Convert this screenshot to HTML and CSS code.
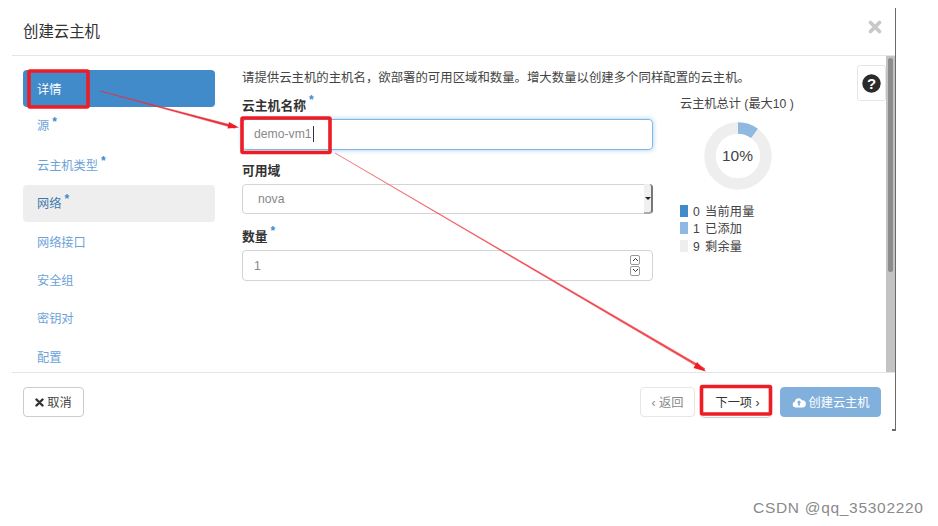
FILE: index.html
```html
<!DOCTYPE html>
<html lang="zh-CN">
<head>
<meta charset="utf-8">
<title>创建云主机</title>
<link rel="stylesheet" href="styles.css">
</head>
<body>
<div class="modal">
  <header class="head">
    <h1 class="title">创建云主机</h1>
    <svg class="close" width="14" height="14" viewBox="0 0 14 14"><path d="M2.500 2.500 11.500 11.500M11.500 2.500 2.500 11.500" stroke="#c8c8c8" stroke-width="3.600" stroke-linecap="round"/></svg>
  </header>
  <div class="main">
    <nav class="nav">
      <a class="item active">详情</a>
      <a class="item raise">源<sup class="req">*</sup></a>
      <a class="item">云主机类型<sup class="req">*</sup></a>
      <a class="item hover">网络<sup class="req">*</sup></a>
      <a class="item">网络接口</a>
      <a class="item">安全组</a>
      <a class="item">密钥对</a>
      <a class="item">配置</a>
    </nav>
    <section class="content">
      <p class="intro">请提供云主机的主机名，欲部署的可用区域和数量。增大数量以创建多个同样配置的云主机。</p>
      <div class="columns">
        <div class="form">
          <label class="label">云主机名称<sup class="req">*</sup></label>
          <div class="field focus"><span>demo-vm1</span><i class="caret"></i></div>
          <label class="label">可用域</label>
          <div class="field select"><span>nova</span><b class="arrow"></b></div>
          <label class="label">数量<sup class="req">*</sup></label>
          <div class="field number"><span>1</span>
            <div class="spin"><i>
              <svg width="7" height="5" viewBox="0 0 7 5"><path d="M1 4 3.500 1.500 6 4" fill="none" stroke="#333" stroke-width="1"/></svg></i><i>
              <svg width="7" height="5" viewBox="0 0 7 5"><path d="M1 1 3.500 3.500 6 1" fill="none" stroke="#333" stroke-width="1"/></svg></i></div>
          </div>
        </div>
        <aside class="quota">
          <div class="quota-title">云主机总计 (最大10 )</div>
          <div class="donut">
            <svg width="68" height="68" viewBox="0 0 68 68">
              <circle cx="34" cy="34" r="28" fill="none" stroke="#eeeeee" stroke-width="11.500"/>
              <circle cx="34" cy="34" r="28" fill="none" stroke="#8fb9e0" stroke-width="11.500" stroke-dasharray="17.600 158.300" transform="rotate(-90 34 34)"/>
            </svg>
            <span class="pct">10%</span>
          </div>
          <ul class="legend">
            <li><i class="sw used"></i>0 当前用量</li>
            <li><i class="sw added"></i>1 已添加</li>
            <li><i class="sw rest"></i>9 剩余量</li>
          </ul>
        </aside>
      </div>
    </section>
    <div class="help">
      <svg width="19" height="19" viewBox="0 0 19 19"><circle cx="9.500" cy="9.500" r="9.200" fill="#2b2b2b"/><text x="9.500" y="14.800" text-anchor="middle" class="help-mark">?</text></svg>
    </div>
    <div class="scrollbar"><div class="thumb"></div></div>
  </div>
  <footer class="foot">
    <button class="btn cancel"><svg width="9" height="9" viewBox="0 0 9 9"><path d="M1.500 1.500 7.500 7.500M7.500 1.500 1.500 7.500" stroke="#333" stroke-width="2.400" stroke-linecap="round"/></svg>取消</button>
    <div class="spacer"></div>
    <button class="btn back">‹ 返回</button>
    <button class="btn next">下一项 ›</button>
    <button class="btn create"><svg width="14" height="11" viewBox="0 0 14 11"><path d="M3.500 10.500a3 3 0 0 1-.6-5.900 3.700 3.700 0 0 1 7-1.300 3.600 3.600 0 0 1 .7 7.200z" fill="#fff"/><path d="M7 3.200 4.600 5.800H6.100V8.500H7.900V5.800H9.400z" fill="#82b0dc"/></svg>创建云主机</button>
  </footer>
</div>
<svg class="marks" width="938" height="526" viewBox="0 0 938 526">
  <rect x="29" y="71" width="59" height="36" rx="1" fill="none" stroke="#ee1c25" stroke-width="3.600"/>
  <rect x="242" y="118" width="88" height="34.500" rx="1" fill="none" stroke="#ee1c25" stroke-width="3.600"/>
  <rect x="701.500" y="386.500" width="69" height="27.500" rx="1" fill="none" stroke="#ee1c25" stroke-width="3.600"/>
  <path d="M100 91 236 126.200 235 128.300z" fill="#e8303a" stroke="#e8303a" stroke-width=".5"/>
  <path d="M229 122 239 127.500 227.500 128.500z" fill="#ee1c25"/>
  <path d="M335 153 705 368.500 704 370.500z" fill="#ef4a50" stroke="#ef4a50" stroke-width=".4"/>
  <path d="M697 362 706 371.500 693.500 368z" fill="#ee1c25"/>
</svg>
<div class="watermark">CSDN @qq_35302220</div>
</body>
</html>
```
FILE: styles.css
```css
* { box-sizing: border-box; }
html, body { margin: 0; padding: 0; background: #fff; }
body {
  width: 938px;
  height: 526px;
  position: relative;
  overflow: hidden;
  padding: 8px 0 0 12px;
  font-family: "Liberation Sans", "Noto Sans CJK SC", sans-serif;
  font-size: 12.2px;
  color: #444;
}
.modal {
  width: 884px;
  height: 423px;
  border-right: 1px solid #6a6a6a;
  display: flex;
  flex-direction: column;
  position: relative;
}
.modal::after {
  content: "";
  position: absolute;
  right: 0;
  bottom: 0;
  width: 3px;
  height: 2px;
  background: #6a6a6a;
}
.head {
  height: 48px;
  flex: none;
  border-bottom: 1px solid #e5e5e5;
  display: flex;
  align-items: center;
  justify-content: space-between;
  padding: 0 13px 3px 11px;
}
.title { margin: 0; font-size: 15.4px; font-weight: 400; color: #333; }
.close { margin-top: -7px; }
.main { flex: none; height: 317px; display: flex; border-bottom: 1px solid #e5e5e5; }
.nav { width: 230px; flex: none; padding: 14px 0 0 11px; display: flex; flex-direction: column; }
.item {
  width: 192px;
  height: 37px;
  flex: none;
  margin-bottom: 1.330px;
  padding-left: 14px;
  display: flex;
  align-items: center;
  border-radius: 4px;
  color: #6da2d8;
  font-size: 12.200px;
}
.item.raise { padding-bottom: 3px; }
.item.active { background: #428bca; color: #fff; }
.item.hover { background: #eeeeee; color: #3f78ad; }
.req { color: #428bca; font-size: 12px; font-weight: 700; line-height: 1; align-self: flex-start; margin: 8px 0 0 3px; }
.content { width: 615px; flex: none; padding-top: 14px; }
.intro { margin: 0 0 8px; font-size: 12.400px; line-height: 17px; width: 520px; white-space: nowrap; }
.columns { display: flex; }
.form { width: 411px; flex: none; }
.label { display: flex; height: 18px; align-items: center; font-size: 12.800px; font-weight: 700; color: #333; margin-bottom: 6px; }
.label .req { margin: -1px 0 0 3px; font-weight: 700; }
.field {
  height: 30.500px;
  border: 1px solid #d4d4d4;
  border-radius: 4px;
  display: flex;
  align-items: center;
  padding-left: 11px;
  margin-bottom: 11px;
  color: #888;
  position: relative;
}
.field.focus { border-color: #7fb6ea; box-shadow: 0 0 5px rgba(102, 175, 233, .6); }
.caret { width: 1px; height: 16px; background: #333; margin-left: 1px; }
.field.select { padding-left: 15px; margin-top: -1px; margin-bottom: 12px; }
.arrow {
  position: absolute;
  right: -1px;
  top: -1px;
  bottom: -1px;
  width: 9px;
  background: #f0f0f0;
  border-right: 2px solid #777;
  border-bottom: 2px solid #aaa;
  border-radius: 0 4px 4px 0;
}
.arrow::after {
  content: "";
  position: absolute;
  left: 1px;
  top: 13px;
  border: 3px solid transparent;
  border-top: 3.500px solid #222;
  border-bottom: 0;
}
.number { justify-content: space-between; padding-right: 12px; }
.number span { padding-top: 2px; }
.spin { display: flex; flex-direction: column; gap: 1px; }
.spin i {
  width: 10px;
  height: 10px;
  border: 1px solid #999;
  border-radius: 2px;
  display: flex;
  align-items: center;
  justify-content: center;
}
.quota { margin-left: 27px; width: 175px; }
.quota-title { height: 18px; line-height: 18px; white-space: nowrap; }
.donut { position: relative; width: 68px; height: 68px; margin: 9px 0 0 23.500px; }
.donut svg { display: block; }
.pct { position: absolute; inset: 0; display: flex; align-items: center; justify-content: center; font-size: 15.500px; color: #444; }
.legend { list-style: none; margin: 12px 0 0; padding: 0; }
.legend li { height: 17.500px; display: flex; align-items: center; white-space: nowrap; word-spacing: 1.500px; letter-spacing: .2px; }
.sw { width: 7.500px; height: 12px; margin-right: 5.500px; flex: none; }
.used { background: #428bca; }
.added { background: #8fb9e0; }
.rest { background: #eeeeee; }
.help {
  width: 29px;
  height: 36px;
  flex: none;
  margin: 9px 0 0 0;
  border: 1px solid #e5e5e5;
  border-radius: 3px;
  display: flex;
  align-items: center;
  justify-content: center;
}
.help-mark { font: 700 15px "Liberation Sans", sans-serif; fill: #fff; }
.scrollbar { width: 9px; flex: none; background: #c3c3c3; padding: 2px 2px 0; }
.thumb { height: 214px; background: #8c8c8c; border-radius: 3px; }
.foot { flex: 1; display: flex; align-items: flex-start; gap: 6px; padding: 14px 14px 0 11px; }
.spacer { flex: 1; }
.btn {
  height: 30px;
  font: inherit;
  border: 1px solid #dcdcdc;
  border-radius: 4px;
  background: #fff;
  color: #444;
  padding: 0;
  display: flex;
  align-items: center;
  justify-content: center;
  gap: 3px;
}
.cancel { width: 61px; border-color: #ccc; }
.back { width: 55px; color: #888; border-color: #e6e6e6; }
.next { width: 70px; color: #333; border: none; padding-left: 3px; box-shadow: 0 1px 1px #ccc; }
.create { width: 101px; margin-left: 3px; background: #82b0dc; border-color: #82b0dc; color: #fff; gap: 3px; }
.marks { position: absolute; left: 0; top: 0; pointer-events: none; }
.watermark { position: absolute; left: 753px; top: 499px; font-size: 15.500px; line-height: 18px; letter-spacing: .7px; color: #8a8a8a; white-space: nowrap; }
```
